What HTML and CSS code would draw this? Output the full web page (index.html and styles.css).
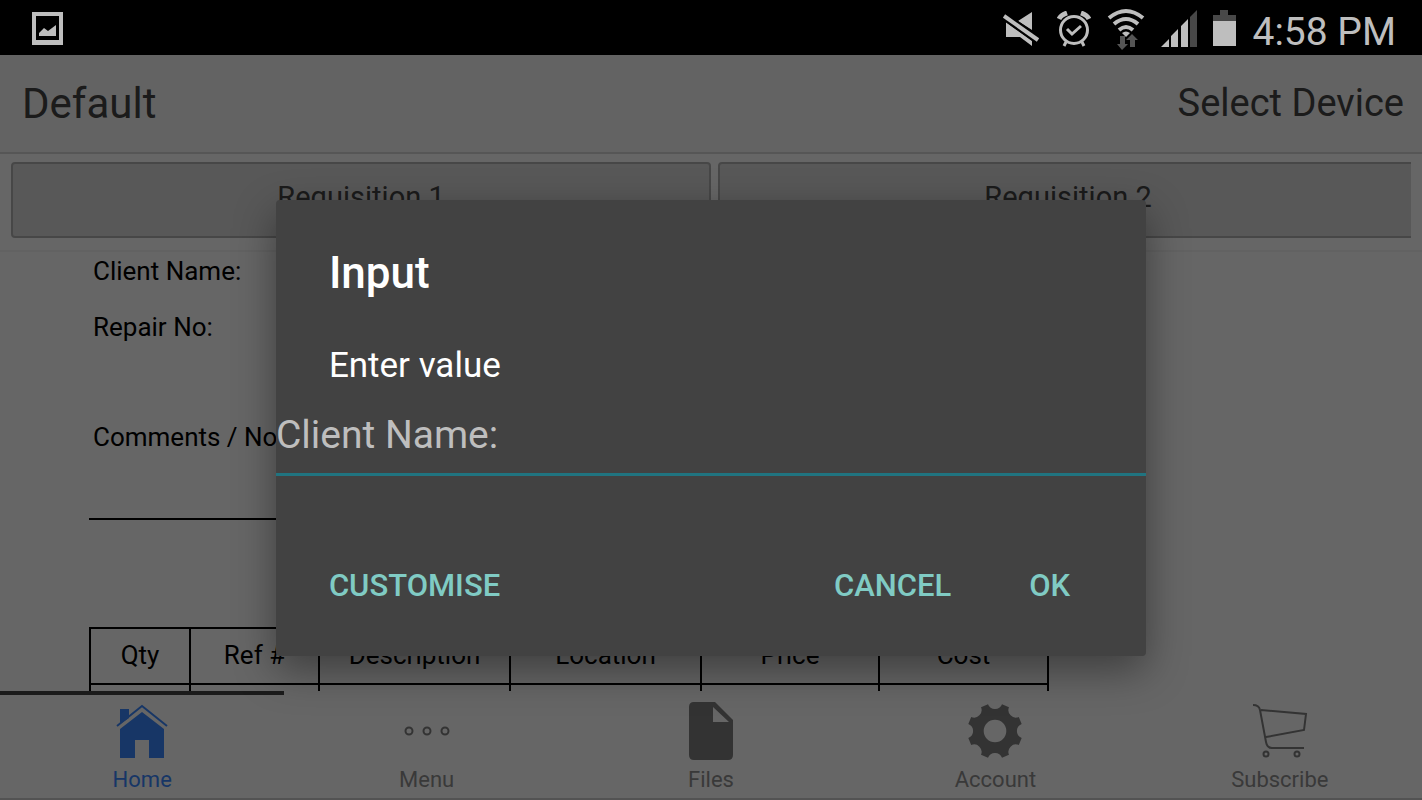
FILE: index.html
```html
<!DOCTYPE html>
<html lang="en">

<head>
    <meta charset="UTF-8">
    <meta name="viewport" content="width=device-width, initial-scale=1.0">
    <title>Default</title>
    <link rel="stylesheet" href="styles.css">
</head>

<body>
    <div class="status-bar">
        <svg width="32" height="34" viewBox="0 0 32 34">
            <path fill="#bebebe" fill-rule="evenodd" d="M0 0h31v33H0zM4 4v24h23V4z"/>
            <path fill="#bebebe" d="M7 24v-3l5-5 4 3 8-6v11z"/>
        </svg>
        <div class="status-icons">
            <svg width="38" height="36" viewBox="0 0 38 36">
                <path fill="#bebebe" d="M3 11v15h14l12 9v-5L4 12zM15 10L29 1v18z"/>
                <path stroke="#000" stroke-width="8" d="M1 5l34 24"/>
                <path stroke="#bebebe" stroke-width="4" d="M1 5l34 24"/>
            </svg>
            <svg width="34" height="36" viewBox="0 0 34 36">
                <g fill="none" stroke="#bebebe">
                    <circle cx="17" cy="19" r="13.500" stroke-width="3"/>
                    <path stroke-width="3" d="M10 18l5 5 9-8"/>
                    <path stroke-width="5" d="M2 8q2-4 8-6M32 8q-2-4-8-6"/>
                    <path stroke-width="3" d="M9 31l-2 4M25 31l2 4"/>
                </g>
            </svg>
            <svg width="38" height="42" viewBox="0 0 38 42">
                <g fill="none" stroke="#bebebe" stroke-width="4">
                    <path d="M2 10q17-14 34 0M7 16q12-10 24 0M12 22q7-6 14 0"/>
                </g>
                <path fill="#bebebe" d="M15 25q4-3 8 0l-4 4z"/>
                <path fill="#555" d="M13 28h5v8h3l-6 6-5-6h3zM23 39v-7h-4l6-6 6 6h-3v7z"/>
            </svg>
            <svg width="36" height="38" viewBox="0 0 36 38">
                <path fill="#bebebe" d="M0 37l8-8v8zM10 37V26l7-7v18zM20 37V16l7-7v28z"/>
                <path fill="#484848" d="M29 37V7l7-7v37z"/>
            </svg>
            <svg width="23" height="37" viewBox="0 0 23 37">
                <path fill="#484848" d="M0 11V5h7V0h8v5h8v6z"/>
                <path fill="#bebebe" d="M0 11h23v25H0z"/>
            </svg>
            <span class="clock">4:58 PM</span>
        </div>
    </div>

    <div class="app">
        <header class="header">
            <h1>Default</h1>
            <button class="select-device" type="button">Select Device</button>
        </header>

        <div class="requisitions">
            <div class="requisition-list">
                <button type="button">Requisition 1</button>
                <button type="button">Requisition 2</button>
            </div>
        </div>

        <main class="sheet">
            <p>Client Name:</p>
            <p>Repair No:</p>
            <p class="comments">Comments / Notes:</p>
            <hr>
            <table>
                <thead>
                    <tr>
                        <th class="qty">Qty</th>
                        <th class="ref">Ref #</th>
                        <th class="description">Description</th>
                        <th class="location">Location</th>
                        <th class="price">Price</th>
                        <th class="cost">Cost</th>
                    </tr>
                </thead>
                <tbody>
                    <tr><td></td><td></td><td></td><td></td><td></td><td></td></tr>
                </tbody>
            </table>
        </main>

        <nav class="tabs">
            <a class="active" href="#home">
                <svg width="60" height="60" viewBox="0 0 60 60">
                    <path fill="currentColor" d="M8 22V7h9v9zM8 27L30 10l22 17v29H37V38H23v18H8z"/>
                    <path fill="none" stroke="currentColor" stroke-width="2" d="M5 24L30 4l25 20"/>
                </svg>
                <span>Home</span>
            </a>
            <a href="#menu">
                <svg width="60" height="60" viewBox="0 0 60 60">
                    <g fill="none" stroke="currentColor" stroke-width="2">
                        <circle cx="12" cy="29" r="3.500"/>
                        <circle cx="30" cy="29" r="3.500"/>
                        <circle cx="48" cy="29" r="3.500"/>
                    </g>
                </svg>
                <span>Menu</span>
            </a>
            <a href="#files">
                <svg width="60" height="60" viewBox="0 0 60 60">
                    <path fill="currentColor" fill-rule="evenodd" d="M13 0h21l18 18v35q0 5-5 5H13q-5 0-5-5V5q0-5 5-5zM32 5v15h16z"/>
                </svg>
                <span>Files</span>
            </a>
            <a href="#account">
                <svg width="60" height="60" viewBox="0 0 60 60">
                    <path fill="currentColor" fill-rule="evenodd" transform="translate(0 -1)" d="M23 3.300A7.500 7.500 0 0 0 37 3.300L44 6.200A7.500 7.500 0 0 0 53.800 16L56.700 23A7.500 7.500 0 0 0 56.700 37L53.800 44A7.500 7.500 0 0 0 44 53.800L37 56.700A7.500 7.500 0 0 0 23 56.700L16 53.800A7.500 7.500 0 0 0 6.200 44L3.300 37A7.500 7.500 0 0 0 3.300 23L6.200 16A7.500 7.500 0 0 0 16 6.200zM30 18.700a11.300 11.300 0 1 0 0 22.600a11.300 11.300 0 1 0 0-22.600z"/>
                </svg>
                <span>Account</span>
            </a>
            <a href="#subscribe">
                <svg width="60" height="60" viewBox="0 0 60 60">
                    <g fill="none" stroke="currentColor" stroke-width="2">
                        <path d="M3 3q6 0 7 5l6 32q1 6 6 6h32M11 8l45 4-2 16-38 7"/>
                        <circle cx="16" cy="52" r="2.500"/>
                        <circle cx="47" cy="52" r="2.500"/>
                    </g>
                </svg>
                <span>Subscribe</span>
            </a>
        </nav>

        <div class="overlay">
            <form class="dialog" role="dialog" aria-labelledby="dialogTitle">
                <h2 id="dialogTitle">Input</h2>
                <label for="value">Enter value</label>
                <input type="text" id="value" name="value" placeholder="Client Name:">
                <div class="dialog-buttons">
                    <button class="customise" type="button">CUSTOMISE</button>
                    <button type="button">CANCEL</button>
                    <button type="submit">OK</button>
                </div>
            </form>
        </div>
    </div>
</body>

</html>
```
FILE: styles.css
```css
* {
    box-sizing: border-box;
}

body {
    font-family: Roboto, sans-serif;
    display: flex;
    flex-direction: column;
    height: 100vh;
    margin: 0;
    background: #000;
    overflow: hidden;
}

button,
input {
    font-family: inherit;
}

svg {
    display: block;
}

.status-bar {
    display: flex;
    align-items: center;
    justify-content: space-between;
    height: 55px;
    padding: 2px 26px 0 32px;
    color: #bebebe;
}

.status-icons {
    display: flex;
    align-items: center;
    gap: 16px;
}

.clock {
    font-size: 39px;
    line-height: 48px;
    padding-top: 6px;
}

.app {
    position: relative;
    display: flex;
    flex-direction: column;
    flex: 1;
    min-height: 0;
    background: #fff;
}

.header {
    display: flex;
    align-items: center;
    justify-content: space-between;
    height: 99px;
    flex-shrink: 0;
    padding: 0 18px 0 22px;
    background: #f8f8f8;
    border-bottom: 2px solid #d8d8d8;
    color: #444;
}

.header h1 {
    margin: 0;
    font-size: 42px;
    font-weight: normal;
}

.select-device {
    padding: 0 0 2px;
    border: none;
    background: none;
    color: #444;
    font-size: 38px;
}

.requisitions {
    flex-shrink: 0;
    padding: 8px 11px 12px;
    border-bottom: 2px solid #f4f4f4;
}

.requisition-list {
    display: flex;
    gap: 7px;
    overflow: hidden;
}

.requisition-list button {
    flex: 0 0 50%;
    height: 76px;
    padding: 0 0 6px;
    border: 2px solid #b2b2b2;
    border-radius: 4px;
    background: #dcdcdc;
    color: #444;
    font-size: 29px;
}

.sheet {
    flex: 1;
    min-height: 0;
    overflow: hidden;
    padding-left: 89px;
    font-size: 26px;
    line-height: 56px;
}

.sheet p {
    margin: 0;
    padding-left: 4px;
}

.sheet p:first-child {
    margin-top: -9px;
}

.sheet .comments {
    margin-top: 54px;
}

.sheet hr {
    width: 620px;
    margin: 53px 0 107px;
    border: none;
    border-top: 2px solid #000;
}

table {
    width: 960px;
    table-layout: fixed;
    border-collapse: collapse;
}

th,
td {
    height: 56px;
    padding: 0 0 2px;
    border: 2px solid #000;
    font-weight: normal;
    line-height: 30px;
}

.qty {
    width: 100px;
}

.ref {
    width: 129px;
}

.description,
.location {
    width: 191px;
}

.price {
    width: 178px;
}

.cost {
    width: 169px;
}

.tabs {
    display: flex;
    flex-shrink: 0;
    height: 109px;
    background: #fff;
    border-bottom: 2px solid #d0d0d0;
}

.tabs a {
    display: flex;
    flex: 1;
    flex-direction: column;
    align-items: center;
    gap: 5px;
    padding-top: 7px;
    border-top: 4px solid transparent;
    color: #808080;
    font-size: 22px;
    line-height: 26px;
    text-decoration: none;
}

.tabs span {
    color: #909090;
}

.tabs .active {
    border-top-color: #444;
}

.tabs .active,
.tabs .active span {
    color: #3b88ff;
}

.overlay {
    position: absolute;
    inset: 0;
    display: flex;
    align-items: center;
    justify-content: center;
    background: rgba(0, 0, 0, 0.6);
}

.dialog {
    width: 61.2%;
    padding: 46px 0 36px;
    border-radius: 4px;
    background: #424242;
    box-shadow: 0 14px 42px rgba(0, 0, 0, 0.4);
    color: #fff;
}

.dialog h2 {
    margin: 0 53px;
    font-size: 44px;
    font-weight: 500;
    line-height: 54px;
}

.dialog label {
    display: block;
    margin: 42px 53px 0;
    font-size: 35px;
    line-height: 48px;
}

.dialog input {
    display: block;
    width: 100%;
    height: 86px;
    padding: 8px 0 0;
    border: none;
    border-bottom: 3px solid #207480;
    background: none;
    color: #fff;
    font-size: 39px;
    outline: none;
}

.dialog input::placeholder {
    color: #bebebe;
}

.dialog-buttons {
    display: flex;
    gap: 78px;
    margin-top: 76px;
    padding: 0 76px 0 53px;
}

.dialog-buttons button {
    padding: 0;
    border: none;
    background: none;
    color: #80cbc4;
    font-size: 31px;
    font-weight: 500;
    line-height: 68px;
}

.dialog-buttons .customise {
    margin-right: auto;
}
```
